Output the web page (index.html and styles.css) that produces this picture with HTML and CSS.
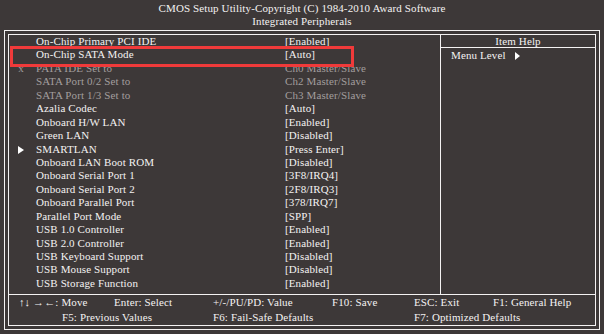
FILE: index.html
```html
<!DOCTYPE html>
<html lang="en">
<head>
<meta charset="UTF-8">
<title>CMOS Setup Utility</title>
<link rel="stylesheet" href="styles.css">
</head>
<body>
<header class="title">
  <div>CMOS Setup Utility-Copyright (C) 1984-2010 Award Software</div>
  <div>Integrated Peripherals</div>
</header>
<div class="frame">
  <div class="inner">
    <section class="items">
      <div class="row"><span class="mark"></span><span>On-Chip Primary PCI IDE</span><span>[Enabled]</span></div>
      <div class="row"><span class="mark"></span><span>On-Chip SATA Mode</span><span>[Auto]</span></div>
      <div class="row off"><span class="mark">x</span><span>PATA IDE Set to</span><span>Ch0 Master/Slave</span></div>
      <div class="row off"><span class="mark"></span><span>SATA Port 0/2 Set to</span><span>Ch2 Master/Slave</span></div>
      <div class="row off"><span class="mark"></span><span>SATA Port 1/3 Set to</span><span>Ch3 Master/Slave</span></div>
      <div class="row"><span class="mark"></span><span>Azalia Codec</span><span>[Auto]</span></div>
      <div class="row"><span class="mark"></span><span>Onboard H/W LAN</span><span>[Enabled]</span></div>
      <div class="row"><span class="mark"></span><span>Green LAN</span><span>[Disabled]</span></div>
      <div class="row"><span class="mark"><svg width="6" height="8" viewBox="0 0 6 8"><path d="M0 0L6 4L0 8Z" fill="#fff"/></svg></span><span>SMARTLAN</span><span>[Press Enter]</span></div>
      <div class="row"><span class="mark"></span><span>Onboard LAN Boot ROM</span><span>[Disabled]</span></div>
      <div class="row"><span class="mark"></span><span>Onboard Serial Port 1</span><span>[3F8/IRQ4]</span></div>
      <div class="row"><span class="mark"></span><span>Onboard Serial Port 2</span><span>[2F8/IRQ3]</span></div>
      <div class="row"><span class="mark"></span><span>Onboard Parallel Port</span><span>[378/IRQ7]</span></div>
      <div class="row"><span class="mark"></span><span>Parallel Port Mode</span><span>[SPP]</span></div>
      <div class="row"><span class="mark"></span><span>USB 1.0 Controller</span><span>[Enabled]</span></div>
      <div class="row"><span class="mark"></span><span>USB 2.0 Controller</span><span>[Enabled]</span></div>
      <div class="row"><span class="mark"></span><span>USB Keyboard Support</span><span>[Disabled]</span></div>
      <div class="row"><span class="mark"></span><span>USB Mouse Support</span><span>[Disabled]</span></div>
      <div class="row"><span class="mark"></span><span>USB Storage Function</span><span>[Enabled]</span></div>
      <div class="select"></div>
    </section>
    <aside class="help">
      <div class="help-head">Item Help</div>
      <div class="level">Menu Level <svg width="5" height="8" viewBox="0 0 5 8"><path d="M0 0L5 4L0 8Z" fill="#fff"/></svg></div>
    </aside>
    <footer class="keys">
      <span class="c1">&#8593;&#8595; &#8594;&#8592;: Move</span>
      <span class="c3">Enter: Select</span>
      <span class="c4">+/-/PU/PD: Value</span>
      <span class="c5">F10: Save</span>
      <span class="c6">ESC: Exit</span>
      <span class="c7">F1: General Help</span>
      <span class="c2">F5: Previous Values</span>
      <span class="c4">F6: Fail-Safe Defaults</span>
      <span class="c6">F7: Optimized Defaults</span>
    </footer>
  </div>
</div>
</body>
</html>
```

FILE: styles.css
```css
body{margin:0;width:604px;height:334px;background:#3d3838;color:#f4f2f2;font-family:"Liberation Serif",serif;font-size:11px;letter-spacing:.12px;overflow:hidden}
.title{text-align:center;line-height:13px;padding-top:2px;height:28px}
.frame{margin-left:4px;width:596px;height:300px;box-sizing:border-box;border:1px solid #f4f2f2;padding:3px}
.inner{height:100%;box-sizing:border-box;border:1px solid #f4f2f2;display:grid;grid-template-columns:432px 1fr;grid-template-rows:260px 1fr}
.items{position:relative;border-right:1px solid #f4f2f2;border-bottom:1px solid #f4f2f2;box-sizing:border-box}
.row{display:grid;grid-template-columns:27px 249px 1fr;line-height:13.45px;height:13.45px;white-space:nowrap}
.mark{text-align:center;padding-right:3px}
.mark svg{vertical-align:-1px}
.off{color:#a29e9e}
.select{position:absolute;left:1px;top:11px;width:344px;height:21px;box-sizing:border-box;border:3px solid #f03a3a}
.help{border-bottom:1px solid #f4f2f2}
.help-head{text-align:center;line-height:12px;height:12px;border-bottom:1px solid #f4f2f2}
.level{padding-left:10px;line-height:14px}
.level svg{margin-left:6px;vertical-align:-1px}
.keys{grid-column:1 / 3;display:grid;grid-template-columns:10px 43px 52px 99px 119px 82px 79px 1fr;grid-auto-rows:15px;line-height:15px;white-space:nowrap}
.c1{grid-column:2 / 4}
.c2{grid-column:3 / 5}
.c3{grid-column:4}
.c4{grid-column:5}
.c5{grid-column:6}
.c6{grid-column:7}
.c7{grid-column:8}
```
